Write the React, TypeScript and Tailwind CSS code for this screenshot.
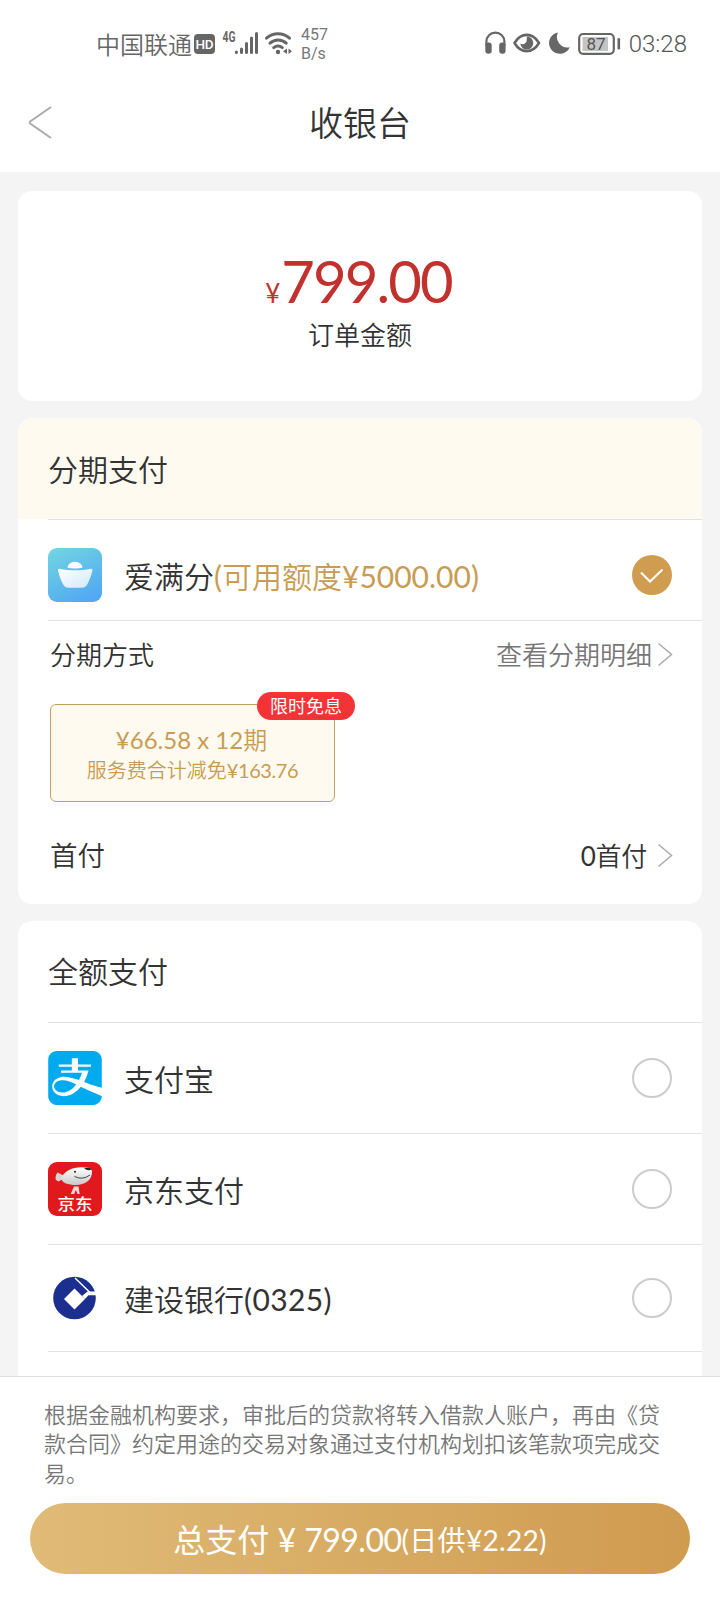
import { useState } from "react";
import type { ReactNode } from "react";
import { SiAlipay } from "react-icons/si";

function StatusBar() {
  return (
    <div className="h-[76px] flex items-start justify-between pl-[96px] pr-[33px] pt-[24px] text-[#666]">
      {/* Left: carrier and network */}
      <div className="h-[40px] flex items-center">
        <span className="text-[24px] leading-[41px] font-[350] w-[98px] whitespace-nowrap">
          中国联通
        </span>
        <span className="w-[21px] h-[20px] rounded-[4px] bg-[#666] text-white font-['Roboto'] font-medium text-[13.5px] leading-[21px] text-center tracking-[-0.3px]">
          HD
        </span>
        <svg width="80" height="40" viewBox="0 0 80 40" className="shrink-0">
          <text
            x="7.5"
            y="18"
            fontSize="14"
            fontWeight="700"
            fontFamily="Roboto, sans-serif"
            fill="#666"
            textLength="13"
            lengthAdjust="spacingAndGlyphs"
          >
            4G
          </text>
          <g stroke="#666" strokeWidth="3" strokeLinecap="round">
            <path d="M21.4 28v.4M26.5 25v3.4M31.5 19.5v8.9M36.5 14v14.4M41.5 9.6v18.8" />
          </g>
          <g stroke="#666" strokeWidth="3" fill="none" strokeLinecap="round">
            <path d="M51.5 14.2a17 17 0 0 1 23 0" />
            <path d="M55 19.2a12 12 0 0 1 16.2 0" />
            <path d="M58.7 23.6a7 7 0 0 1 8.6 0" />
          </g>
          <circle cx="63" cy="28" r="2.2" fill="#666" />
          <path d="M72 24.5v5.6l-4-2.8zM73.5 24.5v5.6l3.5-2.8z" fill="#666" />
        </svg>
        <span className="ml-[6px] font-['Roboto'] font-normal text-[16px] leading-[19px] whitespace-nowrap text-[#777]">
          457
          <br />
          B/s
        </span>
      </div>

      {/* Right: device indicators and clock */}
      <div className="h-[40px] flex items-center">
        <svg width="142" height="40" viewBox="0 0 142 40" className="shrink-0">
          <path
            d="M5.4 22v-4.400a9 9 0 0 1 18 0V22"
            fill="none"
            stroke="#666"
            strokeWidth="2.2"
          />
          <rect x="4.3" y="18.5" width="6.4" height="11.3" rx="3" fill="#666" />
          <rect x="18.2" y="18.5" width="6.4" height="11.3" rx="3" fill="#666" />
          <path
            d="M33.5 19C40 8.2 51.5 8.2 58 19C51.5 29.8 40 29.8 33.5 19Z"
            fill="none"
            stroke="#666"
            strokeWidth="2.6"
            strokeLinejoin="round"
          />
          <path
            d="M45.8 12.500a6.500 6.500 0 1 1 -6.500 7a4.200 4.200 0 0 0 6.500 -3.500z"
            fill="#666"
          />
          <path
            d="M77 8.400A10.800 10.800 0 1 0 88.800 23.200A10.500 10.500 0 0 1 77 8.400Z"
            fill="#666"
          />
          <rect x="98.2" y="10" width="34.6" height="19.8" rx="4" fill="none" stroke="#666" strokeWidth="2.2" />
          <rect x="101.5" y="13" width="25.5" height="14" fill="#c4c4c4" />
          <text
            x="115"
            y="26"
            fontSize="17"
            fontFamily="Roboto, sans-serif"
            fill="#555"
            textAnchor="middle"
          >
            87
          </text>
          <rect x="136.5" y="14" width="2.6" height="11.5" rx="1.2" fill="#666" />
        </svg>
        <span className="ml-[6px] font-['Roboto'] font-light text-[24px] leading-[43px] text-[#555]">
          03:28
        </span>
      </div>
    </div>
  );
}

function Chevron() {
  return (
    <svg width="16" height="26" viewBox="0 0 16 26" fill="none" className="shrink-0">
      <path d="M1.5 1.5L14.5 12.5L1.5 23.5" stroke="#aaa" strokeWidth="1.5" />
    </svg>
  );
}

function IngotIcon() {
  return (
    <svg width="54" height="54" viewBox="0 0 54 54">
      <defs>
        <linearGradient id="ingotBg" x1="0.2" y1="0" x2="0.7" y2="1">
          <stop offset="0" stopColor="#70d3e3" />
          <stop offset="1" stopColor="#52a8f2" />
        </linearGradient>
        <linearGradient id="ingotCup" x1="0" y1="0" x2="1" y2="1">
          <stop offset="0" stopColor="#fff" />
          <stop offset="1" stopColor="#cfe9fb" />
        </linearGradient>
      </defs>
      <rect width="54" height="54" rx="9" fill="url(#ingotBg)" />
      <path d="M19.5 19.8a7.500 6 0 0 1 15 0q-7.500 1.400 -15 0z" fill="#fff" />
      <path
        d="M12 20.800q-2.600 -.4 -2 2c1.300 5 3 10 5 13.500q2 3.500 5.500 3.500h13.400q3.500 0 5.500 -3.500c2 -3.500 3.700 -8.500 5 -13.500q.6 -2.400 -2 -2c-9 2 -21.400 2 -30.400 0z"
        fill="url(#ingotCup)"
      />
    </svg>
  );
}

function AlipayIcon() {
  return (
    <div className="w-[54px] h-[54px] rounded-[9px] bg-white">
      <SiAlipay className="w-[54px] h-[54px] text-[#00aaee]" />
    </div>
  );
}

function JdIcon() {
  return (
    <svg width="54" height="54" viewBox="0 0 54 54">
      <defs>
        <linearGradient id="jdHead" x1="0" y1="0" x2="0" y2="1">
          <stop offset="0" stopColor="#fff" />
          <stop offset="1" stopColor="#c9c9c9" />
        </linearGradient>
      </defs>
      <rect width="54" height="54" rx="9" fill="#e1191c" />
      <path d="M15.5 13.5L9.5 10.500q-3 4.500 -1.500 7.500l2.500 1.500l3.500 -2z" fill="#d5d5d5" />
      <path
        d="M13 16C17 8.500 26 4.500 36 5.500C41 5.200 44 6.500 44 10C44 18 37 23 28 23C20 23 14 21 13 16Z"
        fill="url(#jdHead)"
      />
      <path d="M36 6q7 -1 7.500 1.600q-4 2 -7.500 -1.600z" fill="#222" />
      <circle cx="27" cy="9.8" r="1" fill="#222" />
      <path d="M26.5 14.500q8 4 15.500 -1.500" fill="none" stroke="#444" strokeWidth="1" />
      <path d="M26 24.500h4.500l1.200 7.500h-2l-2 -4l-1.500 4h-3.500z" fill="#f3d9d9" />
      <text
        x="27"
        y="48"
        fontSize="16"
        fontWeight="500"
        fontFamily="'Noto Sans CJK SC', sans-serif"
        fill="#fff"
        textAnchor="middle"
        textLength="35"
        lengthAdjust="spacingAndGlyphs"
      >
        京东
      </text>
    </svg>
  );
}

function CcbIcon() {
  return (
    <svg width="54" height="54" viewBox="0 0 54 54">
      <circle cx="26.5" cy="27" r="21.3" fill="#1c2f8f" />
      <path d="M26.5 17.5L37 28L26.5 38.5L16 28Z" fill="#fff" />
      {/* opening on the right of the ring */}
      <path d="M34 25L39.5 20.5H50V24.3H40.5L37 28Z" fill="#fff" />
      {/* upper stripe */}
      <path d="M27 7L42 21.5" stroke="#fff" strokeWidth="1.5" />
      <path d="M39 8.500L50 17" stroke="#fff" strokeWidth="1" />
    </svg>
  );
}

function Radio({ checked, onClick }: { checked: boolean; onClick: () => void }) {
  if (checked) {
    return (
      <button onClick={onClick} className="block w-[40px] h-[40px] rounded-full bg-[#d09d50]">
        <svg width="40" height="40" viewBox="0 0 40 40" fill="none">
          <path d="M9 17.5L18 26.5L30.5 14.5" stroke="#fff" strokeWidth="2" />
        </svg>
      </button>
    );
  }
  return (
    <button
      onClick={onClick}
      className="block w-[40px] h-[40px] rounded-full border-2 border-[#ccc] bg-white"
    />
  );
}

interface PayMethod {
  id: string;
  name: string;
  tail?: string;
  icon: ReactNode;
  rowClass: string;
}

const payMethods: PayMethod[] = [
  { id: "alipay", name: "支付宝", icon: <AlipayIcon />, rowClass: "h-[111px]" },
  { id: "jd", name: "京东支付", icon: <JdIcon />, rowClass: "h-[111px]" },
  { id: "ccb", name: "建设银行", tail: "(0325)", icon: <CcbIcon />, rowClass: "h-[107px]" },
];

export default function App() {
  const [selected, setSelected] = useState("aimanfen");

  return (
    <div className="w-[720px] h-[1600px] flex flex-col overflow-hidden bg-[#f4f4f4] text-[#333] font-['Lato','Noto_Sans_CJK_SC',sans-serif]">
      {/* Header */}
      <div className="h-[172px] shrink-0 bg-white">
        <StatusBar />
        <div className="h-[94px] flex items-center pl-[28px] pr-[52px]">
          <svg width="24" height="36" viewBox="0 0 24 36" fill="none">
            <path
              d="M23 2L2.5 16.300Q1 17.500 2.500 18.700L23 33"
              stroke="#aaa"
              strokeWidth="2"
            />
          </svg>
          <h1 className="flex-1 text-center text-[34px] leading-[48px] font-[350] text-[#333]">
            收银台
          </h1>
        </div>
      </div>

      <div className="flex-1 min-h-0 overflow-hidden px-[18px] pt-[19px] flex flex-col gap-[17px]">
        {/* Order amount */}
        <div className="h-[210px] shrink-0 rounded-[14px] bg-white flex flex-col items-center pt-[55px]">
          <div className="h-[71px] flex items-baseline pr-[3px] text-[#c1322f] leading-[70px]">
            <span className="text-[26px] mr-px">¥</span>
            <span className="text-[58px] tracking-[-1.9px]">799.00</span>
          </div>
          <div className="text-[26px] leading-[36px] font-[350]">订单金额</div>
        </div>

        {/* Installment payment */}
        <div className="h-[486px] shrink-0 rounded-[14px] bg-white overflow-hidden">
          <div className="h-[101px] pl-[30px] bg-[#fffaf0] text-[30px] leading-[102px] font-[350]">
            分期支付
          </div>
          <div className="ml-[30px] h-[102px] border-y border-[#e2e2e2] pr-[30px] flex items-center">
            <div className="pt-[10px]">
              <IngotIcon />
            </div>
            <div className="flex-1 ml-[22px] pt-[12px] text-[30px] leading-[44px]">
              <span className="font-[350]">爱满分</span>
              <span className="text-[#c99c53]">
                (<span className="font-[350]">可用额度</span>¥5000.00)
              </span>
            </div>
            <div className="pt-[10px]">
              <Radio
                checked={selected === "aimanfen"}
                onClick={() => setSelected("aimanfen")}
              />
            </div>
          </div>
          <div className="pl-[32px] pr-[29px] pt-[14px]">
            <div className="h-[40px] flex items-center text-[26px] font-[350]">
              <span className="flex-1">分期方式</span>
              <span className="mr-[5px] text-[#777]">查看分期明细</span>
              <Chevron />
            </div>
            <div className="relative mt-[29px] w-[285px] h-[98px] rounded-[6px] border border-[#c5a05e] bg-[#fffaf0] text-[#c99c53] flex flex-col items-center pt-[19px]">
              <div className="text-[24px] leading-[32px] pr-[2px]">
                ¥66.58 x 12<span className="font-[350]">期</span>
              </div>
              <div className="text-[20px] leading-[28px]">
                <span className="font-[350]">服务费合计减免</span>
                <span className="tracking-[-0.4px]">¥163.76</span>
              </div>
              <span className="absolute left-[206px] -top-[13px] w-[98px] h-[28px] rounded-full bg-[#f43336] text-white text-[18px] leading-[29px] text-center">
                限时免息
              </span>
            </div>
            <div className="mt-[34px] h-[40px] flex items-center text-[26px]">
              <span className="flex-1 text-[27.5px] font-[350]">首付</span>
              <span className="mr-[10px] tracking-[-0.3px]">
                0<span className="font-[350]">首付</span>
              </span>
              <Chevron />
            </div>
          </div>
        </div>

        {/* Full payment */}
        <div className="shrink-0 h-[500px] rounded-[14px] bg-white overflow-hidden">
          <div className="h-[101px] pl-[30px] text-[30px] leading-[101px] font-[350]">
            全额支付
          </div>
          <div className="ml-[30px] border-t border-[#e2e2e2]">
            {payMethods.map((method) => (
              <div
                key={method.id}
                className={`${method.rowClass} border-b border-[#e2e2e2] pr-[30px] flex items-center`}
              >
                {method.icon}
                <span className="flex-1 ml-[22px] pt-[2px] text-[30px] leading-[44px]">
                  <span className="font-[350]">{method.name}</span>
                  {method.tail && <span className="tracking-[0.4px]">{method.tail}</span>}
                </span>
                <Radio
                  checked={selected === method.id}
                  onClick={() => setSelected(method.id)}
                />
              </div>
            ))}
          </div>
        </div>
      </div>

      {/* Footer */}
      <div className="h-[224px] shrink-0 bg-white border-t border-[#ddd] px-[30px] pt-[23px]">
        <p className="h-[103px] pl-[14px] text-[22px] leading-[29.3px] font-[350] text-[#777]">
          根据金融机构要求，审批后的贷款将转入借款人账户，再由《贷
          <br />
          款合同》约定用途的交易对象通过支付机构划扣该笔款项完成交
          <br />
          易。
        </p>
        <button className="w-full h-[71px] pt-[2px] rounded-full bg-linear-to-r from-[#e0bb77] to-[#cf9b4f] text-white text-[32px] flex items-center justify-center whitespace-pre">
          总支付 ¥ <span className="tracking-[-0.5px]">799.00</span>
          <span className="text-[28px] tracking-[0.3px]">(日供¥2.22)</span>
        </button>
      </div>
    </div>
  );
}
